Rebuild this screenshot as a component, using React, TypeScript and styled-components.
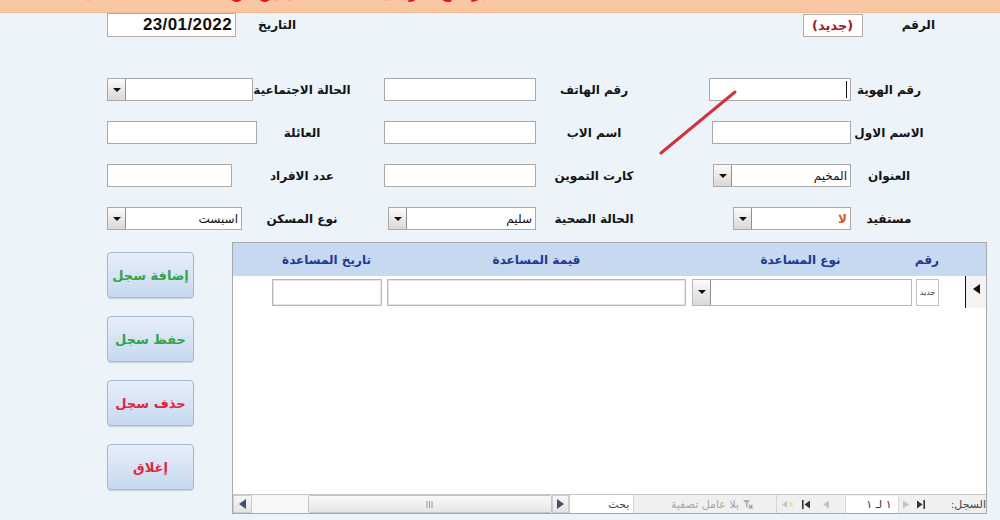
import React from 'react';
import styled, { createGlobalStyle } from 'styled-components';

const ARABIC = '"DejaVu Sans", "Noto Sans", sans-serif';

const GlobalStyle = createGlobalStyle`
  html, body {
    margin: 0;
    padding: 0;
    background: #ecf4f9;
  }
  body {
    font-family: ${ARABIC};
  }
  * {
    box-sizing: border-box;
  }
`;

type FieldDef = {
  label: string;
  labelWidth: number;
  width: number;
  align: 'start' | 'end';
  combo?: boolean;
  value?: string;
  valueColor?: string;
  caret?: boolean;
};

// each form row, right to left: three groups of label + box
const groups = [
  { width: 218, align: 'start' },
  { width: 268, align: 'end' },
  { width: 240, align: 'end' }
] as const;

const rows: FieldDef[][] = [
  [
    { label: 'رقم الهوية', labelWidth: 76, width: 142, align: 'start', caret: true },
    { label: 'رقم الهاتف', labelWidth: 116, width: 152, align: 'start' },
    { label: 'الحالة الاجتماعية', labelWidth: 90, width: 146, align: 'end', combo: true }
  ],
  [
    { label: 'الاسم الاول', labelWidth: 76, width: 139, align: 'start' },
    { label: 'اسم الاب', labelWidth: 116, width: 152, align: 'start' },
    { label: 'العائلة', labelWidth: 90, width: 150, align: 'end' }
  ],
  [
    { label: 'العنوان', labelWidth: 76, width: 138, align: 'start', combo: true, value: 'المخيم' },
    { label: 'كارت التموين', labelWidth: 116, width: 152, align: 'start' },
    { label: 'عدد الافراد', labelWidth: 90, width: 125, align: 'end' }
  ],
  [
    { label: 'مستفيد', labelWidth: 76, width: 118, align: 'start', combo: true, value: 'لا', valueColor: '#cc5a26' },
    { label: 'الحالة الصحية', labelWidth: 116, width: 148, align: 'start', combo: true, value: 'سليم' },
    { label: 'نوع المسكن', labelWidth: 90, width: 135, align: 'end', combo: true, value: 'اسبست' }
  ]
];

const actions = [
  { text: 'إضافة سجل', tone: 'green' },
  { text: 'حفظ سجل', tone: 'green' },
  { text: 'حذف سجل', tone: 'red' },
  { text: 'إغلاق', tone: 'red' }
] as const;

function App() {
  return (
    <Page>
      <GlobalStyle />
      <Band>
        <BandTitle>برنامج ادارة بيانات المستفيدين من المساعدات الانسانية</BandTitle>
      </Band>

      <TopRow>
        <Label>الرقم</Label>
        <NewTag>(جديد)</NewTag>
        <Spacer />
        <Label>التاريخ</Label>
        <DateBox>23/01/2022</DateBox>
      </TopRow>

      <FieldGrid>
        {rows.map((row) =>
          row.map((f, i) => (
            <Field
              key={f.label}
              $labelWidth={f.labelWidth}
              $width={groups[i].width}
              $align={groups[i].align}
            >
              <Label>{f.label}</Label>
              {f.combo ? (
                <Combo $width={f.width} $align={f.align}>
                  <DropButton />
                  <ComboText $color={f.valueColor}>{f.value}</ComboText>
                </Combo>
              ) : (
                <TextBox $width={f.width} $align={f.align}>
                  {f.caret && <Caret />}
                </TextBox>
              )}
            </Field>
          ))
        )}
      </FieldGrid>

      <Lower>
        <Buttons>
          {actions.map((a) => (
            <ActionButton key={a.text} $tone={a.tone}>
              {a.text}
            </ActionButton>
          ))}
        </Buttons>

        <Sheet>
          <SheetHead>
            <span />
            <HeadCell $start>رقم</HeadCell>
            <HeadCell>نوع المساعدة</HeadCell>
            <HeadCell>قيمة المساعدة</HeadCell>
            <HeadCell>تاريخ المساعدة</HeadCell>
            <span />
          </SheetHead>
          <SheetRow>
            <Selector>
              <SelectorArrow />
            </Selector>
            <IdCell>جديد</IdCell>
            <Combo $width={220} $align="start" $light>
              <DropButton />
              <ComboText />
            </Combo>
            <CellBox $width={299} />
            <CellBox $width={110} />
            <span />
          </SheetRow>
          <SheetBody />
          <Footer>
            <ScrollBar>
              <ScrollBtn $width={19}>
                <svg width="7" height="10" viewBox="0 0 7 10">
                  <path d="M7 0 L0 5 L7 10 Z" fill="#3f4f6e" />
                </svg>
              </ScrollBtn>
              <Track />
              <Thumb>
                <svg width="7" height="7" viewBox="0 0 7 7">
                  <path d="M1 0 V7 M3.5 0 V7 M6 0 V7" stroke="#9a9a9a" strokeWidth="1" />
                </svg>
              </Thumb>
              <ScrollBtn $width={17}>
                <svg width="7" height="10" viewBox="0 0 7 10">
                  <path d="M0 0 L7 5 L0 10 Z" fill="#3f4f6e" />
                </svg>
              </ScrollBtn>
            </ScrollBar>
            <SearchBox>بحث</SearchBox>
            <FilterBox>
              <FilterText>بلا عامل تصفية</FilterText>
              <svg width="10" height="9" viewBox="0 0 10 9">
                <path d="M0 0 H7 L4.5 3.5 V8 L3 7 V3.5 Z" fill="#b0b0b0" />
                <path d="M6 5 L9.5 8.5 M9.5 5 L6 8.5" stroke="#9a9a9a" strokeWidth="1.2" />
              </svg>
            </FilterBox>
            <Nav>
              <NavSlot $width={16}>
                <svg width="12" height="9" viewBox="0 0 12 9">
                  <path d="M5 1 L0 4.5 L5 8 Z" fill="#c4c4c4" />
                  <path d="M9 1 L9.6 3.3 L12 3.4 L10.1 4.8 L10.8 7.2 L9 5.8 L7.2 7.2 L7.9 4.8 L6 3.4 L8.4 3.3 Z" fill="#f0d78a" />
                </svg>
              </NavSlot>
              <NavSlot $width={20}>
                <svg width="8" height="9" viewBox="0 0 8 9">
                  <path d="M0 0 H1.6 V9 H0 Z M8 0.5 L2.5 4.5 L8 8.5 Z" fill="#333" />
                </svg>
              </NavSlot>
              <NavSlot $width={20}>
                <svg width="6" height="9" viewBox="0 0 6 9">
                  <path d="M6 0.5 L0 4.5 L6 8.5 Z" fill="#c2c2c2" />
                </svg>
              </NavSlot>
              <NavBox>١ لـ ١</NavBox>
              <NavSlot $width={14}>
                <svg width="6" height="9" viewBox="0 0 6 9">
                  <path d="M0 0.5 L6 4.5 L0 8.5 Z" fill="#c2c2c2" />
                </svg>
              </NavSlot>
              <NavSlot $width={16}>
                <svg width="8" height="9" viewBox="0 0 8 9">
                  <path d="M0 0.5 L5.5 4.5 L0 8.5 Z M6.4 0 H8 V9 H6.4 Z" fill="#333" />
                </svg>
              </NavSlot>
              <NavLabel>السجل:</NavLabel>
            </Nav>
          </Footer>
        </Sheet>
      </Lower>

      <Annotation width="1000" height="520" viewBox="0 0 1000 520">
        <line x1="661" y1="153" x2="735" y2="92" stroke="#d2323c" strokeWidth="3" strokeLinecap="round" />
      </Annotation>
    </Page>
  );
}

export default App;

const Page = styled.div`
  position: relative;
  width: 1000px;
  height: 520px;
  background: #ecf4f9;
  overflow: hidden;
`;

const Band = styled.div`
  height: 13px;
  background: #f9c8a2;
  border-bottom: 1px solid #f0bb93;
  overflow: hidden;
  padding-left: 115px;
`;

const BandTitle = styled.div`
  width: 372px;
  margin-top: -16px;
  direction: rtl;
  text-align: center;
  white-space: nowrap;
  color: #e3141c;
  font: bold 15px ${ARABIC};
  line-height: 18px;
`;

const TopRow = styled.div`
  direction: rtl;
  display: flex;
  align-items: center;
  height: 24px;
  padding: 0 65px 0 107px;
`;

const Spacer = styled.div`
  flex: 1;
`;

const Label = styled.div`
  display: flex;
  align-items: center;
  justify-content: center;
  white-space: nowrap;
  color: #141414;
  font: bold 12px ${ARABIC};
`;

const NewTag = styled.div`
  width: 60px;
  height: 23px;
  margin-right: 39px;
  display: flex;
  align-items: center;
  justify-content: center;
  background: #fff;
  border: 1px solid #adadad;
  color: #9c1a2c;
  font: bold 13px ${ARABIC};
`;

const DateBox = styled.div`
  width: 129px;
  height: 24px;
  margin-right: 22px;
  display: flex;
  align-items: center;
  padding-right: 3px;
  background: #fff;
  border: 1px solid #adadad;
  color: #111;
  font: bold 17px "Liberation Sans", Arial, sans-serif;
  letter-spacing: 0.4px;
`;

const FieldGrid = styled.div`
  direction: rtl;
  display: grid;
  grid-template-columns: 218px 325px 277px;
  grid-auto-rows: 23px;
  row-gap: 20px;
  margin-top: 41px;
  padding: 0 73px 0 107px;
`;

const Field = styled.div<{ $labelWidth: number; $width: number; $align: string }>`
  justify-self: ${(p) => p.$align};
  width: ${(p) => p.$width}px;
  display: grid;
  grid-template-columns: ${(p) => p.$labelWidth}px 1fr;
  height: 23px;
`;

const TextBox = styled.div<{ $width: number; $align: string }>`
  position: relative;
  justify-self: ${(p) => p.$align};
  width: ${(p) => p.$width}px;
  height: 23px;
  background: #fff;
  border: 1px solid #a9a9a9;
`;

const Caret = styled.span`
  position: absolute;
  right: 3px;
  top: 2px;
  bottom: 2px;
  width: 1px;
  background: #111;
`;

const Combo = styled.div<{ $width: number; $align: string; $light?: boolean }>`
  justify-self: ${(p) => p.$align};
  width: ${(p) => p.$width}px;
  height: ${(p) => (p.$light ? 27 : 23)}px;
  direction: ltr;
  display: flex;
  background: #fff;
  border: 1px solid ${(p) => (p.$light ? '#b9b9b9' : '#a9a9a9')};
`;

const DropButton = styled.div`
  width: 18px;
  flex-shrink: 0;
  display: flex;
  align-items: center;
  justify-content: center;
  background: linear-gradient(#fbfbfb, #d8d8d8);
  border-right: 1px solid #8f8f8f;

  &::after {
    content: '';
    border-left: 4px solid transparent;
    border-right: 4px solid transparent;
    border-top: 4px solid #111;
  }
`;

const ComboText = styled.div<{ $color?: string }>`
  flex: 1;
  direction: rtl;
  display: flex;
  align-items: center;
  padding-right: 3px;
  color: ${(p) => p.$color || '#111'};
  font: ${(p) => (p.$color ? 'bold ' : '')}12px ${ARABIC};
`;

const Lower = styled.div`
  display: flex;
  margin-top: 12px;
  padding-left: 107px;
`;

const Buttons = styled.div`
  width: 87px;
  margin-top: 10px;
  display: flex;
  flex-direction: column;
  gap: 18px;
`;

const ActionButton = styled.button<{ $tone: 'green' | 'red' }>`
  height: 46px;
  padding: 0;
  border: 1px solid #a3b9d6;
  border-radius: 4px;
  background: linear-gradient(#e7effa, #c7d8ef);
  box-shadow: 0 1px 1px rgba(80, 110, 150, 0.25);
  color: ${(p) => (p.$tone === 'green' ? '#33a447' : '#e0263a')};
  font: bold 13px ${ARABIC};
  direction: rtl;
`;

const Sheet = styled.div`
  width: 755px;
  height: 272px;
  margin-left: 38px;
  display: flex;
  flex-direction: column;
  background: #fff;
  border: 1px solid #a9a9a9;
`;

const columns = '21px 53px 223px 305px 115px 1fr';

const SheetHead = styled.div`
  direction: rtl;
  display: grid;
  grid-template-columns: ${columns};
  align-items: center;
  height: 33px;
  background: #c6d9f1;
`;

const HeadCell = styled.div<{ $start?: boolean }>`
  justify-self: ${(p) => (p.$start ? 'start' : 'center')};
  margin-right: ${(p) => (p.$start ? 26 : 0)}px;
  color: #1f3a92;
  font: bold 12px ${ARABIC};
  white-space: nowrap;
`;

const SheetRow = styled.div`
  direction: rtl;
  display: grid;
  grid-template-columns: ${columns};
  align-items: center;
  height: 32px;
`;

const Selector = styled.div`
  align-self: stretch;
  display: flex;
  justify-content: center;
  padding-top: 8px;
  background: #f3f3f3;
  border-left: 1px solid #111;
`;

const SelectorArrow = styled.span`
  width: 0;
  height: 0;
  border-top: 5px solid transparent;
  border-bottom: 5px solid transparent;
  border-right: 7px solid #111;
`;

const IdCell = styled.div`
  justify-self: start;
  margin-right: 26px;
  width: 23px;
  height: 27px;
  display: flex;
  align-items: center;
  justify-content: center;
  border: 1px solid #c3c3c3;
  color: #333;
  font: 8px ${ARABIC};
`;

const CellBox = styled.div<{ $width: number }>`
  justify-self: center;
  width: ${(p) => p.$width}px;
  height: 27px;
  border: 1px solid #b9b9b9;
  box-shadow: inset 0 0 0 1px #e4e4e4;
`;

const SheetBody = styled.div`
  flex: 1;
  background: #fff;
`;

const Footer = styled.div`
  height: 19px;
  display: flex;
  background: #f0f0f0;
  border-top: 1px solid #c6c6c6;
  font: 11px ${ARABIC};
`;

const ScrollBar = styled.div`
  display: flex;
  width: 337px;
  border-right: 1px solid #cfcfcf;
`;

const ScrollBtn = styled.div<{ $width: number }>`
  width: ${(p) => p.$width}px;
  display: flex;
  align-items: center;
  justify-content: center;
  background: linear-gradient(#f6f6f6, #e4e4e4);
  border: 1px solid #cdcdcd;
`;

const Track = styled.div`
  width: 56px;
  background: #f7f7f7;
`;

const Thumb = styled.div`
  width: 245px;
  display: flex;
  align-items: center;
  justify-content: center;
  background: linear-gradient(#f8f8f8, #e6e6e6);
  border: 1px solid #c4c4c4;
  border-radius: 2px;
`;

const SearchBox = styled.div`
  width: 65px;
  direction: rtl;
  display: flex;
  align-items: center;
  padding-right: 4px;
  background: #fff;
  color: #444;
`;

const FilterBox = styled.div`
  width: 147px;
  display: flex;
  align-items: center;
  justify-content: center;
  gap: 4px;
  padding-left: 14px;
  border-left: 1px solid #d3d3d3;
  border-right: 1px solid #d3d3d3;
`;

const FilterText = styled.span`
  direction: rtl;
  color: #a5a5a5;
`;

const Nav = styled.div`
  flex: 1;
  display: flex;
  align-items: center;
  padding-left: 3px;
`;

const NavSlot = styled.div<{ $width: number }>`
  width: ${(p) => p.$width}px;
  display: flex;
  align-items: center;
  justify-content: center;
`;

const NavBox = styled.div`
  width: 54px;
  height: 17px;
  margin-left: 9px;
  direction: rtl;
  display: flex;
  align-items: center;
  padding-right: 6px;
  background: #fff;
  border-left: 1px solid #dadada;
  border-right: 1px solid #dadada;
  color: #333;
`;

const NavLabel = styled.div`
  margin-left: 22px;
  direction: rtl;
  color: #444;
  white-space: nowrap;
`;

const Annotation = styled.svg`
  position: absolute;
  left: 0;
  top: 0;
  pointer-events: none;
`;
